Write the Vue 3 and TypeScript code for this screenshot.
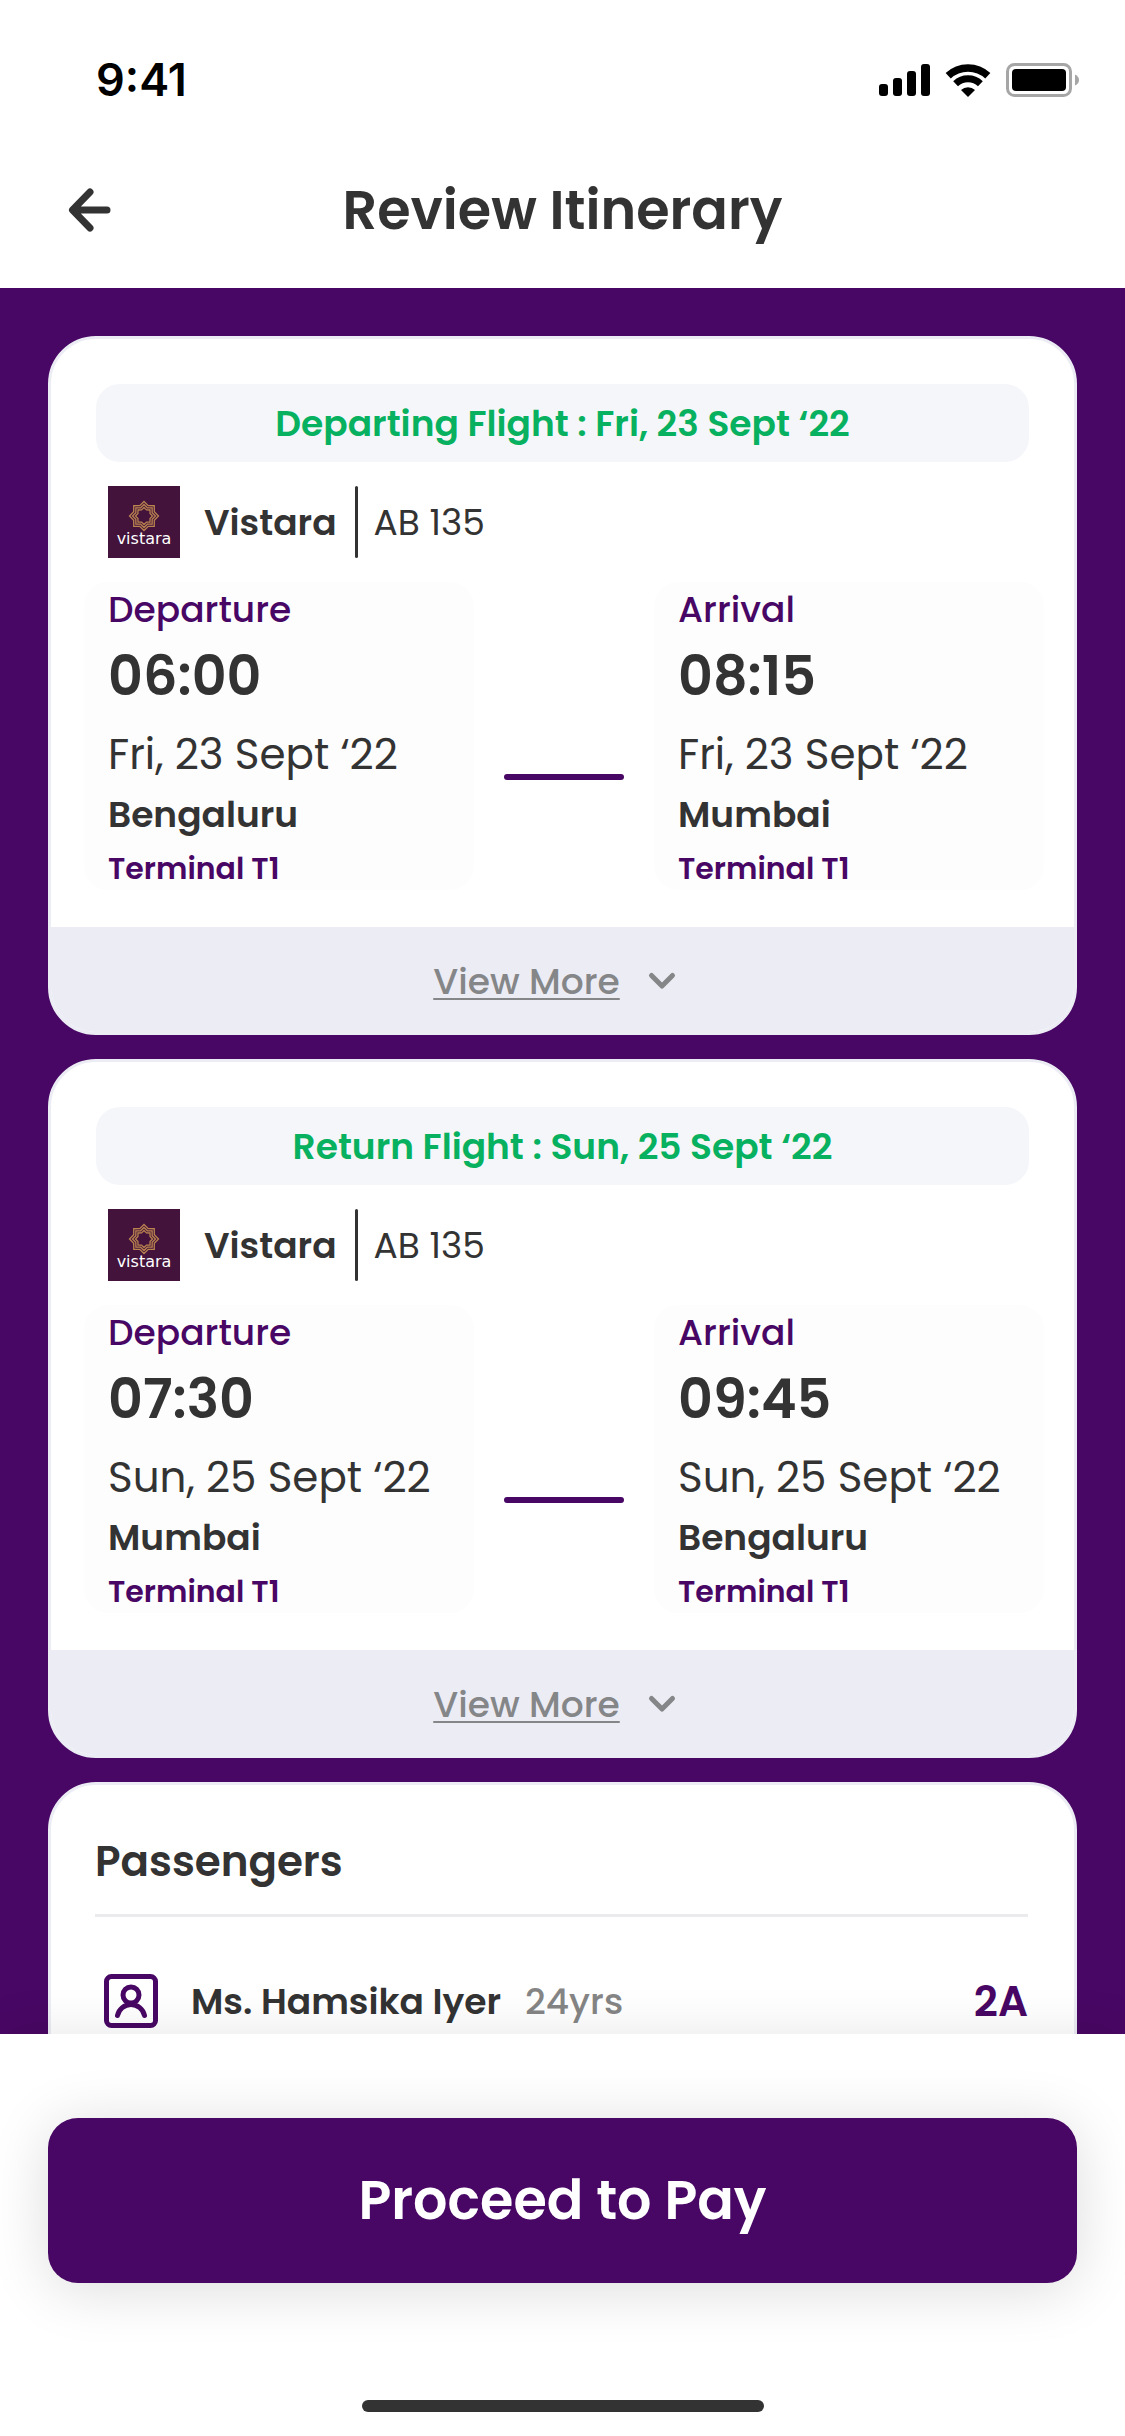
<script setup lang="ts">
interface Stop {
  label: string
  time: string
  date: string
  city: string
  terminal: string
}

interface Flight {
  id: string
  banner: string
  airline: string
  code: string
  stops: Stop[]
}

interface Passenger {
  name: string
  age: string
  seat: string
}

const flights: Flight[] = [
  {
    id: 'outbound',
    banner: 'Departing Flight : Fri, 23 Sept ‘22',
    airline: 'Vistara',
    code: 'AB 135',
    stops: [
      { label: 'Departure', time: '06:00', date: 'Fri, 23 Sept ‘22', city: 'Bengaluru', terminal: 'Terminal T1' },
      { label: 'Arrival', time: '08:15', date: 'Fri, 23 Sept ‘22', city: 'Mumbai', terminal: 'Terminal T1' },
    ],
  },
  {
    id: 'return',
    banner: 'Return Flight : Sun, 25 Sept ‘22',
    airline: 'Vistara',
    code: 'AB 135',
    stops: [
      { label: 'Departure', time: '07:30', date: 'Sun, 25 Sept ‘22', city: 'Mumbai', terminal: 'Terminal T1' },
      { label: 'Arrival', time: '09:45', date: 'Sun, 25 Sept ‘22', city: 'Bengaluru', terminal: 'Terminal T1' },
    ],
  },
]

const passengers: Passenger[] = [{ name: 'Ms. Hamsika Iyer', age: '24yrs', seat: '2A' }]

// Eight-pointed star outline centred on the airline emblem.
function star(radius: number): string {
  return Array.from({ length: 16 }, (_, i) => {
    const r = i % 2 === 0 ? radius : radius * 0.77
    const a = (i * Math.PI) / 8
    return `${(36 + r * Math.sin(a)).toFixed(2)},${(30 - r * Math.cos(a)).toFixed(2)}`
  }).join(' ')
}

const emblem: string[] = [14.5, 11.5, 8.5].map(star)
</script>

<template>
  <div class="screen">
    <header class="top">
      <div class="status">
        <span class="clock">9:41</span>
        <div class="status-icons">
          <svg class="signal" width="51" height="33" viewBox="0 0 51 33" aria-hidden="true">
            <rect x="0" y="20" width="9" height="12" rx="3" />
            <rect x="14" y="14" width="9" height="18" rx="3" />
            <rect x="28" y="7" width="9" height="25" rx="3" />
            <rect x="42" y="0" width="9" height="32" rx="3" />
          </svg>
          <svg class="wifi" width="46" height="33" viewBox="0 0 46 33" aria-hidden="true">
            <path d="M3.2 11.8A29 29 0 0 1 42.8 11.8" fill="none" stroke="#000" stroke-width="7.5" />
            <path d="M10.6 19.7A18.2 18.2 0 0 1 35.4 19.7" fill="none" stroke="#000" stroke-width="7" />
            <path d="M23 33L16 26A10.5 10.5 0 0 1 30 26Z" />
          </svg>
          <svg class="battery" width="74" height="34" viewBox="0 0 74 34" aria-hidden="true">
            <rect x="1.5" y="1.5" width="63" height="31" rx="7" fill="none" stroke="#a6a6a6" stroke-width="3" />
            <rect x="6" y="6" width="54" height="22" rx="4" />
            <path d="M69 11.5Q73 13.5 73 17T69 22.5Z" fill="#a6a6a6" />
          </svg>
        </div>
      </div>
      <div class="nav">
        <button class="back" type="button" aria-label="Back">
          <svg width="60" height="60" viewBox="0 0 60 60" aria-hidden="true">
            <path d="M47 30H13M30 12L12.500 30L30 48" />
          </svg>
        </button>
        <h1>Review Itinerary</h1>
      </div>
    </header>

    <main class="content">
      <article v-for="flight in flights" :key="flight.id" class="card">
        <div class="flight">
          <h2 class="banner">{{ flight.banner }}</h2>
          <div class="airline">
            <svg class="logo" width="72" height="72" viewBox="0 0 72 72" role="img" aria-label="Vistara logo">
              <rect width="72" height="72" fill="#43133b" />
              <polygon v-for="points in emblem" :key="points" :points="points" />
              <text x="36" y="58" text-anchor="middle">vistara</text>
            </svg>
            <strong class="airline-name">{{ flight.airline }}</strong>
            <span class="rule"></span>
            <span class="code">{{ flight.code }}</span>
          </div>
          <div class="route">
            <section v-for="stop in flight.stops" :key="stop.label" class="stop">
              <p class="label">{{ stop.label }}</p>
              <p class="time">{{ stop.time }}</p>
              <p class="date">{{ stop.date }}</p>
              <p class="city">{{ stop.city }}</p>
              <p class="terminal">{{ stop.terminal }}</p>
            </section>
            <span class="dash"></span>
          </div>
        </div>
        <button class="more" type="button">
          <span>View More</span>
          <svg width="60" height="36" viewBox="0 0 60 36" aria-hidden="true">
            <path d="M19.500 12.500L30 23L40.500 12.500" />
          </svg>
        </button>
      </article>

      <article class="card passengers">
        <h2>Passengers</h2>
        <ul>
          <li v-for="person in passengers" :key="person.name">
            <svg width="72" height="72" viewBox="0 0 72 72" aria-hidden="true">
              <rect x="11.500" y="11.500" width="49" height="49" rx="5" />
              <circle cx="36" cy="30" r="8" />
              <path d="M22.500 50.500A13.800 13.800 0 0 1 49.500 50.500" />
            </svg>
            <strong class="person">{{ person.name }}</strong>
            <span class="age">{{ person.age }}</span>
            <strong class="seat">{{ person.seat }}</strong>
          </li>
        </ul>
      </article>
    </main>

    <footer class="bottom">
      <button class="pay" type="button">Proceed to Pay</button>
      <span class="home"></span>
    </footer>
  </div>
</template>

<style>
body {
  margin: 0;
}
</style>

<style scoped>
.screen {
  display: flex;
  flex-direction: column;
  height: 100vh;
  background: #fff;
  color: #333;
  font-family: Poppins, Inter, sans-serif;
  font-size: 36px;
}

h1,
h2,
p,
ul {
  margin: 0;
  padding: 0;
}

button {
  border: 0;
  padding: 0;
  background: none;
  font: inherit;
  color: inherit;
  cursor: pointer;
}

svg {
  display: block;
  flex: none;
}

strong {
  font-weight: 600;
}

.status {
  display: flex;
  align-items: center;
  justify-content: space-between;
  height: 104px;
  padding: 28px 45px 0 96px;
}

.clock {
  color: #000;
  font-family: Inter, sans-serif;
  font-size: 45px;
  font-weight: 600;
  line-height: 54px;
}

.status-icons {
  display: flex;
  align-items: center;
  gap: 15px;
}

.nav {
  display: grid;
  grid-template-columns: 1fr auto 1fr;
  align-items: center;
  height: 156px;
  padding: 0 60px;
}

.back {
  justify-self: start;
}

.back path {
  fill: none;
  stroke: #333;
  stroke-width: 7;
  stroke-linecap: round;
  stroke-linejoin: round;
}

h1 {
  font-size: 54px;
  font-weight: 600;
  line-height: 60px;
}

.content {
  flex: 1;
  display: flex;
  flex-direction: column;
  gap: 24px;
  min-height: 0;
  padding: 48px;
  overflow-y: auto;
  scrollbar-width: none;
  background: #480764;
}

.card {
  flex: none;
  overflow: hidden;
  border: 3px solid #ececf5;
  border-radius: 48px;
  background: #fff;
}

.flight {
  display: flex;
  flex-direction: column;
  gap: 24px;
  padding: 45px 30px 37px 33px;
}

.banner {
  margin: 0 15px 0 12px;
  padding-top: 2px;
  border-radius: 24px;
  background: #f5f6fa;
  color: #07b160;
  font-size: 36px;
  font-weight: 600;
  line-height: 76px;
  text-align: center;
}

.airline {
  display: flex;
  align-items: center;
  height: 72px;
  padding-left: 24px;
}

.logo polygon {
  fill: none;
  stroke: #b9824f;
  stroke-width: 1.3;
}

.logo text {
  fill: #fff;
  font-family: "DejaVu Sans", sans-serif;
  font-size: 16px;
}

.airline-name {
  margin-left: 24px;
}

.rule {
  width: 3px;
  height: 72px;
  margin: 0 16px 0 18px;
  border-radius: 2px;
  background: #333;
}

.route {
  display: flex;
  gap: 30px;
}

.stop {
  flex: 1;
  padding: 2px 24px 0;
  border-radius: 24px;
  background: #fdfdfd;
}

.stop:last-of-type {
  order: 2;
}

.dash {
  order: 1;
  width: 120px;
  height: 6px;
  margin-top: 192px;
  border-radius: 3px;
  background: #480764;
}

.label {
  color: #480764;
  font-weight: 500;
  line-height: 52px;
}

.time {
  font-size: 54px;
  font-weight: 600;
  line-height: 80px;
}

.date {
  font-size: 42px;
  line-height: 78px;
}

.city {
  font-weight: 600;
  line-height: 42px;
}

.terminal {
  margin-top: 12px;
  color: #480764;
  font-size: 30px;
  font-weight: 600;
  line-height: 42px;
}

.more {
  display: flex;
  align-items: center;
  justify-content: center;
  gap: 12px;
  width: 100%;
  height: 105px;
  padding-top: 3px;
  background: #ececf5;
  color: #858688;
  font-weight: 500;
}

.more span {
  text-decoration: underline;
  text-decoration-thickness: 2px;
  text-decoration-skip-ink: none;
  text-underline-offset: 4px;
}

.more path {
  fill: none;
  stroke: #858688;
  stroke-width: 5;
  stroke-linecap: round;
  stroke-linejoin: round;
}

.passengers {
  padding: 45px 46px 45px 44px;
}

.passengers h2 {
  padding-bottom: 21px;
  border-bottom: 3px solid #ebebed;
  font-size: 42px;
  font-weight: 600;
  line-height: 63px;
}

.passengers ul {
  padding-top: 48px;
  list-style: none;
}

.passengers li {
  display: flex;
  align-items: center;
  gap: 24px;
}

.passengers svg {
  fill: none;
  stroke: #480764;
  stroke-width: 5;
  stroke-linecap: round;
}

.age {
  color: #858585;
  font-weight: 500;
}

.seat {
  margin-left: auto;
  color: #480764;
  font-size: 42px;
}

.bottom {
  display: flex;
  flex-direction: column;
  align-items: center;
  padding: 84px 48px 24px;
  background: #fff;
  box-shadow: 0 0 48px rgba(0, 0, 0, 0.1);
}

.pay {
  width: 100%;
  border-radius: 30px;
  background: #480764;
  box-shadow: 0 6px 60px rgba(0, 0, 0, 0.14);
  color: #fff;
  font-size: 54px;
  font-weight: 600;
  line-height: 165px;
}

.home {
  width: 40%;
  max-width: 402px;
  height: 12px;
  margin-top: 117px;
  border-radius: 6px;
  background: #333;
}
</style>
